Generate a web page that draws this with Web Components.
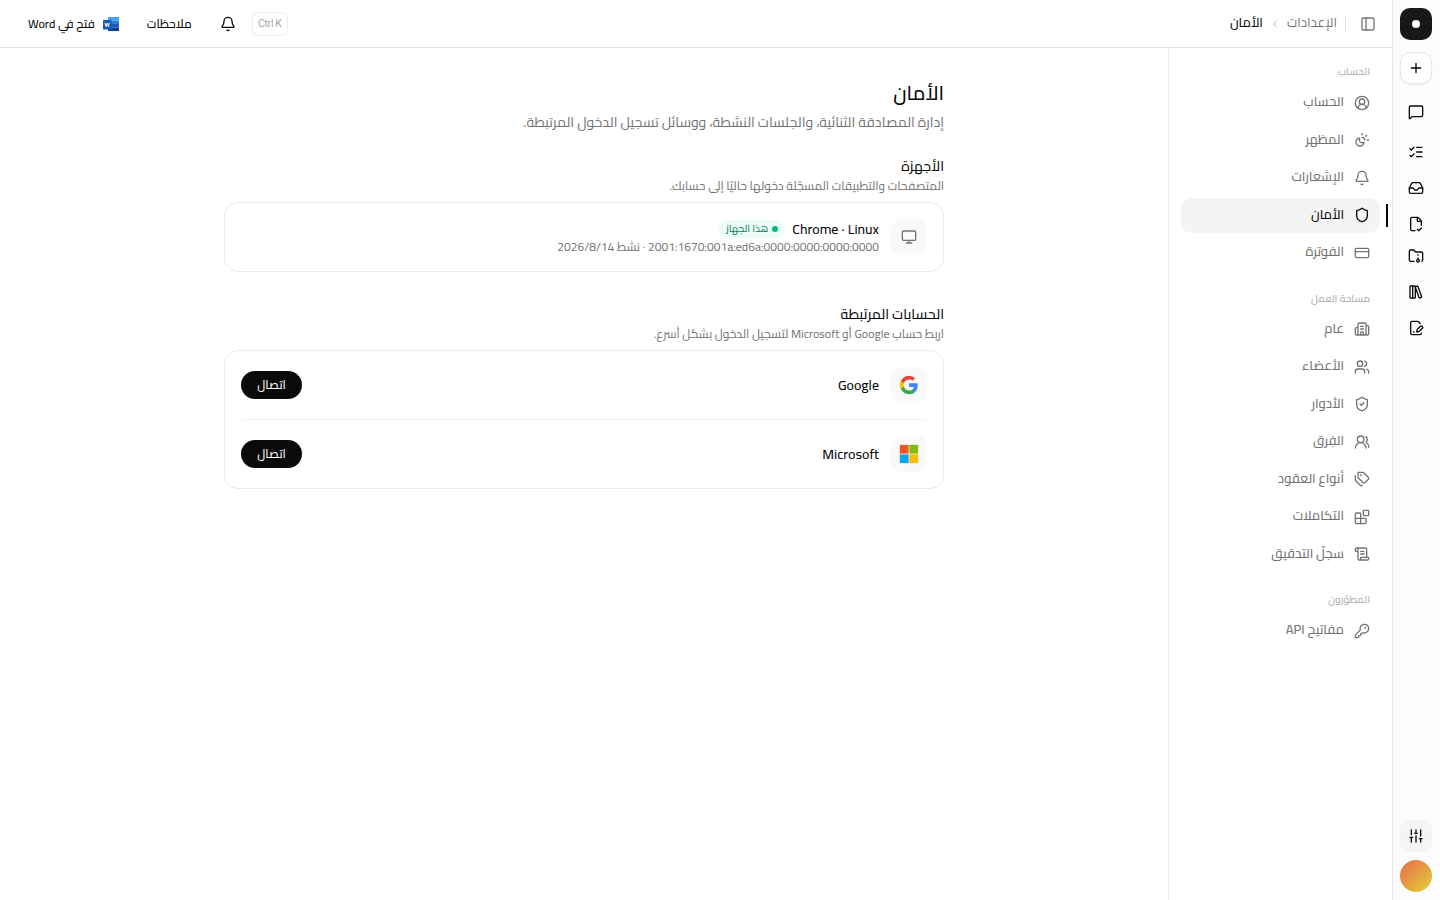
<!DOCTYPE html>
<html lang="ar" dir="rtl">
<head>
<meta charset="utf-8">
<title>الأمان</title>
<style>
  html, body { margin: 0; height: 100%; background: #fff; overflow: hidden; }
  body { font-family: Cairo, "Noto Sans Arabic", "Open Sans", "DejaVu Sans", sans-serif; color: #0a0a0a; }
</style>
</head>
<body>
<settings-app></settings-app>

<script>
const ICONS = {
  plus: '<path d="M5 12h14M12 5v14"/>',
  message: '<path d="M22 17a2 2 0 0 1-2 2H6.828a2 2 0 0 0-1.414.586l-2.202 2.202A.71.71 0 0 1 2 21.286V5a2 2 0 0 1 2-2h16a2 2 0 0 1 2 2z"/>',
  checks: '<path d="M13 5h8M13 12h8M13 19h8M3 17l2 2 4-4M3 7l2 2 4-4"/>',
  inbox: '<path d="M22 12h-6l-2 3h-4l-2-3H2"/><path d="M5.45 5.11 2 12v6a2 2 0 0 0 2 2h16a2 2 0 0 0 2-2v-6l-3.45-6.89A2 2 0 0 0 16.76 4H7.24a2 2 0 0 0-1.79 1.11z"/>',
  fileCheck: '<path d="M10.5 22H6a2 2 0 0 1-2-2V4a2 2 0 0 1 2-2h8a2.4 2.4 0 0 1 1.706.706l3.588 3.588A2.4 2.4 0 0 1 20 8v6"/><path d="M14 2v5a1 1 0 0 0 1 1h5M14 20l2 2 4-4"/>',
  folder: '<circle cx="15" cy="19" r="2"/><path d="M20.9 19.8A2 2 0 0 0 22 18V8a2 2 0 0 0-2-2h-7.9a2 2 0 0 1-1.69-.9L9.6 3.9A2 2 0 0 0 7.93 3H4a2 2 0 0 0-2 2v13a2 2 0 0 0 2 2h5.1M15 11v-1M15 17v-2"/>',
  library: '<rect width="8" height="18" x="3" y="3" rx="1"/><path d="M7 3v18M20.4 18.9c.2.5-.1 1.1-.6 1.3l-1.9.7c-.5.2-1.1-.1-1.3-.6L11.1 5.1c-.2-.5.1-1.1.6-1.3l1.9-.7c.5-.2 1.1.1 1.3.6Z"/>',
  filePen: '<path d="m18.226 5.226-2.52-2.52A2.4 2.4 0 0 0 14 2H6a2 2 0 0 0-2 2v16a2 2 0 0 0 2 2h12a2 2 0 0 0 2-2v-.351"/><path d="M21.378 12.626a1 1 0 0 0-3.004-3.004l-4.01 4.012a2 2 0 0 0-.506.854l-.837 2.87a.5.5 0 0 0 .62.62l2.87-.837a2 2 0 0 0 .854-.506zM8 18h1"/>',
  sliders: '<path d="M10 8h4M12 21v-9M12 8V3M17 16h4M19 12V3M19 21v-5M3 14h4M5 10V3M5 21v-7"/>',
  panel: '<rect width="18" height="18" x="3" y="3" rx="2"/><path d="M9 3v18"/>',
  chevron: '<path d="m15 18-6-6 6-6"/>',
  user: '<path d="M18 20a6 6 0 0 0-12 0"/><circle cx="12" cy="10" r="4"/><circle cx="12" cy="12" r="10"/>',
  theme: '<path d="M12 2v2M14.837 16.385a6 6 0 1 1-7.223-7.222c.624-.147.97.66.715 1.248a4 4 0 0 0 5.26 5.259c.589-.255 1.396.09 1.248.715M16 12a4 4 0 0 0-4-4M19 5l-1.256 1.256M20 12h2"/>',
  bell: '<path d="M10.268 21a2 2 0 0 0 3.464 0M3.262 15.326A1 1 0 0 0 4 17h16a1 1 0 0 0 .74-1.673C19.41 13.956 18 12.499 18 8A6 6 0 0 0 6 8c0 4.499-1.411 5.956-2.738 7.326"/>',
  shield: '<path d="M20 13c0 5-3.5 7.5-7.66 8.95a1 1 0 0 1-.67-.01C7.5 20.5 4 18 4 13V6a1 1 0 0 1 1-1c2 0 4.5-1.2 6.24-2.72a1.17 1.17 0 0 1 1.52 0C14.51 3.81 17 5 19 5a1 1 0 0 1 1 1z"/>',
  shieldCheck: '<path d="M20 13c0 5-3.5 7.5-7.66 8.95a1 1 0 0 1-.67-.01C7.5 20.5 4 18 4 13V6a1 1 0 0 1 1-1c2 0 4.5-1.2 6.24-2.72a1.17 1.17 0 0 1 1.52 0C14.51 3.81 17 5 19 5a1 1 0 0 1 1 1zM9 12l2 2 4-4"/>',
  card: '<rect width="20" height="14" x="2" y="5" rx="2"/><path d="M2 10h20"/>',
  building: '<path d="M10 12h4M10 8h4M14 21v-3a2 2 0 0 0-4 0v3M6 10H4a2 2 0 0 0-2 2v7a2 2 0 0 0 2 2h16a2 2 0 0 0 2-2V9a2 2 0 0 0-2-2h-2M6 21V5a2 2 0 0 1 2-2h8a2 2 0 0 1 2 2v16"/>',
  users: '<path d="M16 21v-2a4 4 0 0 0-4-4H6a4 4 0 0 0-4 4v2M16 3.128a4 4 0 0 1 0 7.744M22 21v-2a4 4 0 0 0-3-3.87"/><circle cx="9" cy="7" r="4"/>',
  team: '<path d="M18 21a8 8 0 0 0-16 0M22 20c0-3.37-2-6.5-4-8a5 5 0 0 0-.45-8.3"/><circle cx="10" cy="8" r="5"/>',
  tags: '<path d="M13.172 2a2 2 0 0 1 1.414.586l6.71 6.71a2.4 2.4 0 0 1 0 3.408l-4.592 4.592a2.4 2.4 0 0 1-3.408 0l-6.71-6.71A2 2 0 0 1 6 9.172V3a1 1 0 0 1 1-1zM2 7v6.172a2 2 0 0 0 .586 1.414l6.71 6.71a2.4 2.4 0 0 0 3.191.193"/><circle cx="10.5" cy="6.5" r=".5" fill="currentColor"/>',
  blocks: '<path d="M10 22V7a1 1 0 0 0-1-1H4a2 2 0 0 0-2 2v12a2 2 0 0 0 2 2h12a2 2 0 0 0 2-2v-5a1 1 0 0 0-1-1H2"/><rect x="14" y="2" width="8" height="8" rx="1"/>',
  scroll: '<path d="M15 12h-5M15 8h-5M19 17V5a2 2 0 0 0-2-2H4M8 21h12a2 2 0 0 0 2-2v-1a1 1 0 0 0-1-1H11a1 1 0 0 0-1 1v1a2 2 0 1 1-4 0V5a2 2 0 1 0-4 0v2a1 1 0 0 0 1 1h3"/>',
  key: '<path d="M2.586 17.414A2 2 0 0 0 2 18.828V21a1 1 0 0 0 1 1h3a1 1 0 0 0 1-1v-1a1 1 0 0 1 1-1h1a1 1 0 0 0 1-1v-1a1 1 0 0 1 1-1h.172a2 2 0 0 0 1.414-.586l.814-.814a6.5 6.5 0 1 0-4-4z"/><circle cx="16.5" cy="7.5" r=".5" fill="currentColor"/>',
  monitor: '<rect width="20" height="14" x="2" y="3" rx="2"/><path d="M8 21h8M12 17v4"/>',
};

const LOGOS = {
  word: '<svg viewBox="0 0 16 14" width="16" height="14"><path fill="#41a5ee" d="M5 0h11v3.5H5z"/><path fill="#2b7cd3" d="M5 3.5h11V7H5z"/><path fill="#185abd" d="M5 7h11v3.5H5z"/><path fill="#103f91" d="M5 10.5h11V14H5z"/><rect y="3" width="8.5" height="9.5" rx=".6" fill="#185abd"/><path d="m2 5.8 1 3.8 1.2-3.5 1.2 3.5 1-3.8" fill="none" stroke="#fff" stroke-width="1"/></svg>',
  google: '<svg viewBox="0 0 24 24" width="20" height="20"><path fill="#4285F4" d="M22.56 12.25c0-.78-.07-1.53-.2-2.25H12v4.26h5.92a5.06 5.06 0 0 1-2.2 3.32v2.77h3.57c2.08-1.92 3.27-4.74 3.27-8.1z"/><path fill="#34A853" d="M12 23c2.97 0 5.46-.98 7.28-2.66l-3.57-2.77c-.98.66-2.23 1.06-3.71 1.06-2.86 0-5.29-1.93-6.16-4.53H2.18v2.84A11 11 0 0 0 12 23z"/><path fill="#FBBC05" d="M5.84 14.1a6.6 6.6 0 0 1 0-4.2V7.06H2.18a11 11 0 0 0 0 9.88z"/><path fill="#EA4335" d="M12 5.38c1.62 0 3.06.56 4.21 1.64l3.15-3.15A11 11 0 0 0 2.18 7.06L5.84 9.9C6.71 7.3 9.14 5.38 12 5.38z"/></svg>',
  microsoft: '<svg viewBox="0 0 20 20" width="20" height="20"><path fill="#f3f3f3" d="M0 0h20v20H0z"/><path fill="#F35325" d="M.9.9h8.7v8.7H.9z"/><path fill="#81BC06" d="M10.4.9h8.7v8.7h-8.7z"/><path fill="#05A6F0" d="M.9 10.4h8.7v8.7H.9z"/><path fill="#FFBA08" d="M10.4 10.4h8.7v8.7h-8.7z"/></svg>',
};

class BaseElement extends HTMLElement {
  constructor() {
    super();
    this.attachShadow({ mode: "open" });
  }

  connectedCallback() {
    const template = document.createElement("template");
    template.innerHTML = "<style>" + this.css() + "</style>" + this.html();
    this.shadowRoot.replaceChildren(template.content.cloneNode(true));
  }

  css() { return ""; }
  html() { return "<slot></slot>"; }
}

class UiIcon extends BaseElement {
  css() {
    return ":host { display: block; flex: none; line-height: 0; } svg { display: block; }";
  }
  html() {
    const name = this.getAttribute("name");
    if (LOGOS[name]) return LOGOS[name];
    const size = this.getAttribute("size") || 16;
    return `<svg width="${size}" height="${size}" viewBox="0 0 24 24" fill="none" stroke="currentColor" stroke-width="2" stroke-linecap="round" stroke-linejoin="round">${ICONS[name]}</svg>`;
  }
}

class RailButton extends BaseElement {
  css() {
    return `
      :host { display: flex; align-items: center; justify-content: center; width: 32px; height: 32px; flex: none; box-sizing: border-box; border-radius: 10px; }
      :host([kind="logo"]) { background: #171717; }
      :host([kind="logo"])::before { content: ""; width: 8px; height: 8px; border-radius: 50%; background: #fff; }
      :host([kind="new"]) { background: #fff; border: 1px solid #e8e8e8; box-shadow: 0 1px 2px rgba(0,0,0,.06); }
      :host([kind="active"]) { background: #f4f4f4; border-radius: 8px; }
      :host([kind="avatar"]) { border-radius: 50%; background: linear-gradient(135deg, #e8694a, #e2d336); }`;
  }
  html() {
    const icon = this.getAttribute("icon");
    return icon ? `<ui-icon name="${icon}"></ui-icon>` : "";
  }
}

class AppRail extends BaseElement {
  css() {
    return `
      :host { display: flex; flex-direction: column; align-items: center; box-sizing: border-box; width: 48px; padding: 8px 0; background: #fcfcfc; box-shadow: inset 1px 0 #e5e5e5; }
      .new { margin-top: 12px; }
      nav { display: flex; flex-direction: column; gap: 4px; margin-top: 12px; }
      .checks { margin-top: 4px; }
      .folder { margin-top: -4px; }
      .end { display: flex; flex-direction: column; gap: 8px; margin-top: auto; }`;
  }
  html() {
    return `
      <rail-button kind="logo"></rail-button>
      <rail-button class="new" kind="new" icon="plus"></rail-button>
      <nav>
        <rail-button icon="message"></rail-button>
        <rail-button class="checks" icon="checks"></rail-button>
        <rail-button icon="inbox"></rail-button>
        <rail-button icon="fileCheck"></rail-button>
        <rail-button class="folder" icon="folder"></rail-button>
        <rail-button icon="library"></rail-button>
        <rail-button icon="filePen"></rail-button>
      </nav>
      <div class="end">
        <rail-button kind="active" icon="sliders"></rail-button>
        <rail-button kind="avatar"></rail-button>
      </div>`;
  }
}

class AppHeader extends BaseElement {
  css() {
    return `
      :host { display: flex; align-items: center; height: 47px; flex: none; padding: 0 16px 0 28px; border-bottom: 1px solid #e2e2e2; font-size: 13px; font-weight: 500; line-height: 20px; white-space: nowrap; }
      .panel { color: #737373; }
      .rule { width: 1px; height: 16px; margin: 0 14px 0 8px; background: #e5e5e5; }
      .parent { color: #737373; font-weight: 400; }
      .parent, .current { margin-bottom: 4px; }
      .chevron { margin: 0 6px; color: #b5b5b5; }
      .tools { display: flex; align-items: center; margin-right: auto; font-size: 12px; }
      kbd { display: flex; align-items: center; justify-content: center; box-sizing: border-box; width: 36px; height: 24px; border: 1px solid #ebebeb; border-radius: 7px; font: 400 10px/15px Inter, Roboto, sans-serif; letter-spacing: -.5px; color: #a1a1a1; direction: ltr; }
      .bell { margin: 0 16px 0 28px; }
      .word { margin: 0 28px 0 8px; }`;
  }
  html() {
    return `
      <ui-icon class="panel" name="panel"></ui-icon>
      <span class="rule"></span>
      <span class="parent">الإعدادات</span>
      <ui-icon class="chevron" name="chevron" size="12"></ui-icon>
      <span class="current">الأمان</span>
      <div class="tools">
        <kbd>Ctrl K</kbd>
        <ui-icon class="bell" name="bell"></ui-icon>
        <span>ملاحظات</span>
        <ui-icon class="word" name="word"></ui-icon>
        <span>فتح في Word</span>
      </div>`;
  }
}

class NavGroup extends BaseElement {
  css() {
    return `
      :host { display: flex; flex-direction: column; gap: 2px; }
      .label { height: 23px; padding-right: 10px; font-size: 10.25px; font-weight: 500; line-height: 23px; color: #b0b0b0; }`;
  }
  html() {
    return `<div class="label">${this.getAttribute("label")}</div><slot></slot>`;
  }
}

class NavItem extends BaseElement {
  css() {
    return `
      :host { position: relative; display: flex; align-items: center; gap: 10px; height: 35.5px; padding: 0 10px; border-radius: 10px; font-size: 13px; font-weight: 500; line-height: 19.5px; color: #737373; }
      :host([active]) { background: #f4f4f4; color: #0a0a0a; }
      :host([active])::before { content: ""; position: absolute; right: -8px; top: 6px; width: 2px; height: 23px; background: #0a0a0a; }
      span { margin-bottom: 2px; }`;
  }
  html() {
    return `<ui-icon name="${this.getAttribute("icon")}"></ui-icon><span><slot></slot></span>`;
  }
}

class SettingsNav extends BaseElement {
  css() {
    return `
      :host { display: flex; flex-direction: column; gap: 16px; width: 199px; flex: none; padding: 12px; border-left: 1px solid #ebebeb; }`;
  }
  html() {
    return `
      <nav-group label="الحساب">
        <nav-item icon="user">الحساب</nav-item>
        <nav-item icon="theme">المظهر</nav-item>
        <nav-item icon="bell">الإشعارات</nav-item>
        <nav-item icon="shield" active>الأمان</nav-item>
        <nav-item icon="card">الفوترة</nav-item>
      </nav-group>
      <nav-group label="مساحة العمل">
        <nav-item icon="building">عام</nav-item>
        <nav-item icon="users">الأعضاء</nav-item>
        <nav-item icon="shieldCheck">الأدوار</nav-item>
        <nav-item icon="team">الفِرق</nav-item>
        <nav-item icon="tags">أنواع العقود</nav-item>
        <nav-item icon="blocks">التكاملات</nav-item>
        <nav-item icon="scroll">سجلّ التدقيق</nav-item>
      </nav-group>
      <nav-group label="المطوّرون">
        <nav-item icon="key">مفاتيح API</nav-item>
      </nav-group>`;
  }
}

class SettingsSection extends BaseElement {
  css() {
    return `
      :host { display: block; }
      .title { height: 21px; font-size: 14px; font-weight: 500; line-height: 21px; }
      .hint { height: 18px; margin-bottom: 7px; font-size: 12px; line-height: 18px; color: #737373; }
      .card { border: 1px solid #ebebeb; border-radius: 14px; padding: 0 16px; background: #fff; }`;
  }
  html() {
    return `
      <div class="title"><slot name="title"></slot></div>
      <div class="hint"><slot name="hint"></slot></div>
      <div class="card"><slot></slot></div>`;
  }
}

class SettingsRow extends BaseElement {
  css() {
    return `
      :host { display: flex; align-items: center; gap: 12px; height: 68px; }
      :host([divided]) { border-bottom: 1px solid #f2f2f2; }
      .tile { display: flex; align-items: center; justify-content: center; width: 36px; height: 36px; flex: none; border-radius: 10px; background: #f9f9f9; color: #737373; }
      .body { flex: 1; font-size: 14px; font-weight: 500; line-height: 18px; }`;
  }
  html() {
    return `
      <span class="tile"><ui-icon name="${this.getAttribute("icon")}"></ui-icon></span>
      <div class="body"><slot></slot></div>
      <slot name="action"></slot>`;
  }
}

class StatusBadge extends BaseElement {
  css() {
    return `
      :host { display: flex; align-items: center; gap: 4px; box-sizing: border-box; height: 18px; padding: 0 6px 0 8px; border-radius: 9px; background: #ecfdf5; color: #15805d; font-size: 10px; font-weight: 500; line-height: 16px; }
      :host::before { content: ""; width: 6px; height: 6px; flex: none; border-radius: 50%; background: #00bc7d; }`;
  }
}

class PillButton extends BaseElement {
  css() {
    return `
      :host { display: flex; align-items: center; justify-content: center; width: 61px; height: 28px; border-radius: 14px; background: #0a0a0a; color: #fafafa; font-size: 12px; font-weight: 500; line-height: 18px; }`;
  }
}

class SecurityPage extends BaseElement {
  css() {
    return `
      :host { display: block; width: 720px; margin: 0 auto; padding-top: 32px; }
      h1 { height: 28px; margin: 0; font-size: 20px; font-weight: 500; line-height: 26px; }
      .lead { height: 20px; margin: 4px 0 24px; font-size: 14px; line-height: 20px; color: #737373; }
      settings-section + settings-section { margin-top: 32px; }
      .line { display: flex; align-items: center; gap: 8px; padding-top: 2px; }
      .meta { font-size: 12px; font-weight: 400; color: #737373; }`;
  }
  html() {
    return `
      <h1>الأمان</h1>
      <div class="lead">إدارة المصادقة الثنائية، والجلسات النشطة، ووسائل تسجيل الدخول المرتبطة.</div>
      <settings-section>
        <span slot="title">الأجهزة</span>
        <span slot="hint">المتصفحات والتطبيقات المسجّلة دخولها حاليًا إلى حسابك.</span>
        <settings-row icon="monitor">
          <div class="line">
            <span>Chrome · Linux</span>
            <status-badge>هذا الجهاز</status-badge>
          </div>
          <div class="meta"><bdi>2001:1670:001a:ed6a:0000:0000:0000:0000</bdi> · نشط <bdi>2026/8/14</bdi></div>
        </settings-row>
      </settings-section>
      <settings-section>
        <span slot="title">الحسابات المرتبطة</span>
        <span slot="hint">اربط حساب Google أو Microsoft لتسجيل الدخول بشكل أسرع.</span>
        <settings-row icon="google" divided>
          <span>Google</span>
          <pill-button slot="action">اتصال</pill-button>
        </settings-row>
        <settings-row icon="microsoft">
          <span>Microsoft</span>
          <pill-button slot="action">اتصال</pill-button>
        </settings-row>
      </settings-section>`;
  }
}

class SettingsApp extends BaseElement {
  css() {
    return `
      :host { display: flex; height: 100vh; }
      app-rail { flex: none; }
      .frame { display: flex; flex-direction: column; flex: 1; min-width: 0; }
      .content { display: flex; flex: 1; min-height: 0; }
      main { flex: 1; min-width: 0; }`;
  }
  html() {
    return `
      <app-rail></app-rail>
      <div class="frame">
        <app-header></app-header>
        <div class="content">
          <settings-nav></settings-nav>
          <main><security-page></security-page></main>
        </div>
      </div>`;
  }
}

customElements.define("ui-icon", UiIcon);
customElements.define("rail-button", RailButton);
customElements.define("app-rail", AppRail);
customElements.define("app-header", AppHeader);
customElements.define("nav-group", NavGroup);
customElements.define("nav-item", NavItem);
customElements.define("settings-nav", SettingsNav);
customElements.define("settings-section", SettingsSection);
customElements.define("settings-row", SettingsRow);
customElements.define("status-badge", StatusBadge);
customElements.define("pill-button", PillButton);
customElements.define("security-page", SecurityPage);
customElements.define("settings-app", SettingsApp);
</script>
</body>
</html>
